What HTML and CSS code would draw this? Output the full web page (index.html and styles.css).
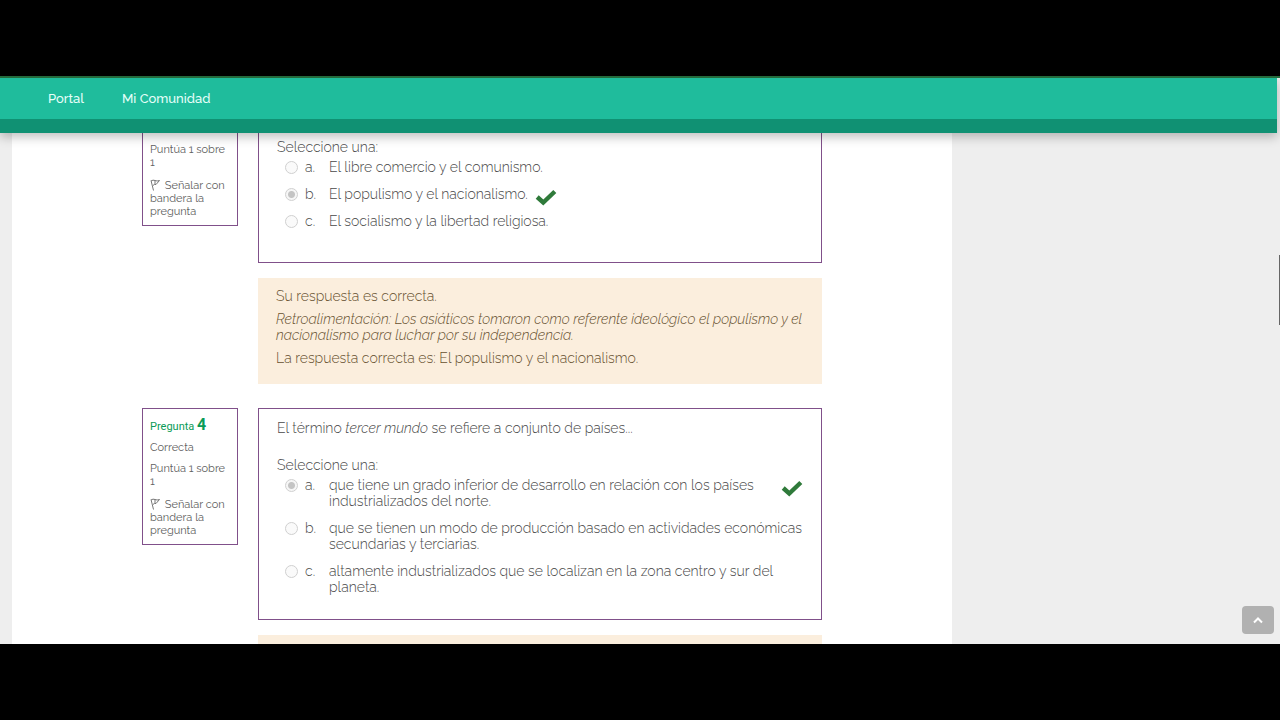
FILE: index.html
```html
<!DOCTYPE html>
<html lang="es">
<head>
<meta charset="utf-8">
<title>Cuestionario</title>
<link rel="stylesheet" href="styles.css">
</head>
<body>
<div class="screen">
  <header class="topbar">
    <nav class="menu">
      <a href="#">Portal</a>
      <a href="#">Mi Comunidad</a>
    </nav>
  </header>
  <div class="viewport">
    <main class="page">
      <section class="question question-cut">
        <div class="info">
          <p>Puntúa 1 sobre 1</p>
          <p><svg class="flag" viewBox="0 0 10 12"><path d="M1 1.500 3.500 11.500M1 2Q3 .5 5 1.500T9.500 1.500L6 5.500Q4 5 3 6.500M5 1.500V5"/></svg> Señalar con bandera la pregunta</p>
        </div>
        <div class="content">
          <div class="formulation">
            <p class="prompt">Seleccione una:</p>
            <div class="option"><input type="radio" name="q3" id="q3a" disabled><label for="q3a"><span class="letter">a.</span><span>El libre comercio y el comunismo.</span></label></div>
            <div class="option"><input type="radio" name="q3" id="q3b" checked disabled><label for="q3b"><span class="letter">b.</span><span>El populismo y el nacionalismo.</span></label><svg class="check" viewBox="0 0 20 16"><path d="M2 8 7.500 13 18 3"/></svg></div>
            <div class="option"><input type="radio" name="q3" id="q3c" disabled><label for="q3c"><span class="letter">c.</span><span>El socialismo y la libertad religiosa.</span></label></div>
          </div>
          <div class="feedback">
            <p>Su respuesta es correcta.</p>
            <p><em>Retroalimentación: Los asiáticos tomaron como referente ideológico el populismo y el nacionalismo para luchar por su independencia.</em></p>
            <p>La respuesta correcta es: El populismo y el nacionalismo.</p>
          </div>
        </div>
      </section>
      <section class="question">
        <div class="info">
          <h3 class="number">Pregunta <b>4</b></h3>
          <p>Correcta</p>
          <p>Puntúa 1 sobre 1</p>
          <p><svg class="flag" viewBox="0 0 10 12"><path d="M1 1.500 3.500 11.500M1 2Q3 .5 5 1.500T9.500 1.500L6 5.500Q4 5 3 6.500M5 1.500V5"/></svg> Señalar con bandera la pregunta</p>
        </div>
        <div class="content">
          <div class="formulation">
            <p class="text">El término <em>tercer mundo</em> se refiere a conjunto de países...</p>
            <p class="prompt">Seleccione una:</p>
            <div class="option"><input type="radio" name="q4" id="q4a" checked disabled><label for="q4a"><span class="letter">a.</span><span>que tiene un grado inferior de desarrollo en relación con los países industrializados del norte.</span></label><svg class="check" viewBox="0 0 20 16"><path d="M2 8 7.500 13 18 3"/></svg></div>
            <div class="option"><input type="radio" name="q4" id="q4b" disabled><label for="q4b"><span class="letter">b.</span><span>que se tienen un modo de producción basado en actividades económicas secundarias y terciarias.</span></label></div>
            <div class="option"><input type="radio" name="q4" id="q4c" disabled><label for="q4c"><span class="letter">c.</span><span>altamente industrializados que se localizan en la zona centro y sur del planeta.</span></label></div>
          </div>
          <div class="feedback"></div>
        </div>
      </section>
    </main>
  </div>
  <div class="scrollbar"></div>
  <button class="to-top" aria-label="Subir"><svg viewBox="0 0 12 8"><path d="M2 6.500 6 2.500 10 6.500"/></svg></button>
</div>
</body>
</html>
```
FILE: styles.css
```css
* { box-sizing: border-box; }
body {
  margin: 0;
  height: 100vh;
  padding: 76px 0;
  background: #000;
  color: #484848;
  font: 300 14px/16px Raleway, Lato, sans-serif;
}
p, h3 { margin: 0; }
.screen {
  position: relative;
  display: flex;
  flex-direction: column;
  height: 100%;
  overflow: hidden;
  background: #eee;
  border-top: 2px solid #256b3c;
}
.topbar {
  z-index: 1;
  margin-right: 3px;
  background: #1fbc9c;
  border-bottom: 14px solid #109173;
  box-shadow: 0 4px 10px rgba(0, 0, 0, .25);
}
.menu {
  display: flex;
  gap: 38px;
  padding: 13px 48px 12px;
  font-size: 13px;
  font-weight: 500;
}
.menu a { color: #e6fff9; text-decoration: none; }
.viewport {
  display: flex;
  flex: 1;
  min-height: 0;
  overflow: hidden;
  padding: 0 328px 0 12px;
}
.page {
  flex: 1;
  background: #fff;
  padding: 0 130px;
}
.question {
  display: grid;
  grid-template-columns: 96px 1fr;
  gap: 20px;
  align-items: start;
  margin-bottom: 24px;
}
.info {
  display: flex;
  flex-direction: column;
  gap: 8px;
  padding: 8px 7px 7px;
  border: 1px solid #80508a;
  color: #606060;
  font-size: 11px;
  font-weight: 400;
  line-height: 13px;
}
.info p + p:last-child { margin-top: 2px; }
.number {
  margin-bottom: -2px;
  color: #0b9b58;
  font: 11px/16px Roboto, sans-serif;
}
.number b { font-size: 16px; }
.flag {
  width: 10px;
  height: 12px;
  margin-right: 2px;
  vertical-align: -2px;
  fill: none;
  stroke: #777;
}
.formulation {
  padding: 11px 18px 24px;
  border: 1px solid #80508a;
}
.question-cut .info { border-top: 0; padding-top: 10px; }
.question-cut .formulation { border-top: 0; padding-top: 6px; padding-bottom: 33px; }
.text { margin-bottom: 21px; }
.prompt { margin-bottom: 4px; }
.option {
  display: flex;
  align-items: flex-start;
  gap: 7px;
  padding-left: 8px;
}
.option + .option { margin-top: 11px; }
.option input {
  appearance: none;
  flex: none;
  width: 13px;
  height: 13px;
  margin: 2px 0 0;
  border: 1px solid #d0d0d0;
  border-radius: 50%;
  background: #fafafa;
}
.option input:checked {
  background: radial-gradient(circle, #c4c4c4 3px, #f6f6f6 4px);
}
.option label { display: flex; }
.letter { flex: none; width: 24px; }
.check {
  flex: none;
  width: 22px;
  height: 18px;
  margin: 2px 0 -4px;
  fill: none;
  stroke: #2f7a3a;
  stroke-width: 4;
}
.feedback {
  min-height: 106px;
  margin-top: 15px;
  padding: 10px 18px 18px;
  background: #fbeedd;
  color: #66502f;
}
.feedback p + p { margin-top: 7px; }
.scrollbar {
  position: absolute;
  top: 177px;
  right: 0;
  width: 1px;
  height: 70px;
  background: #666;
}
.to-top {
  position: absolute;
  right: 6px;
  bottom: 10px;
  display: grid;
  place-items: center;
  width: 32px;
  height: 28px;
  padding: 0;
  border: 0;
  border-radius: 4px;
  background: #b1b1b1;
}
.to-top svg {
  width: 12px;
  height: 8px;
  fill: none;
  stroke: #fff;
  stroke-width: 2;
}
```
